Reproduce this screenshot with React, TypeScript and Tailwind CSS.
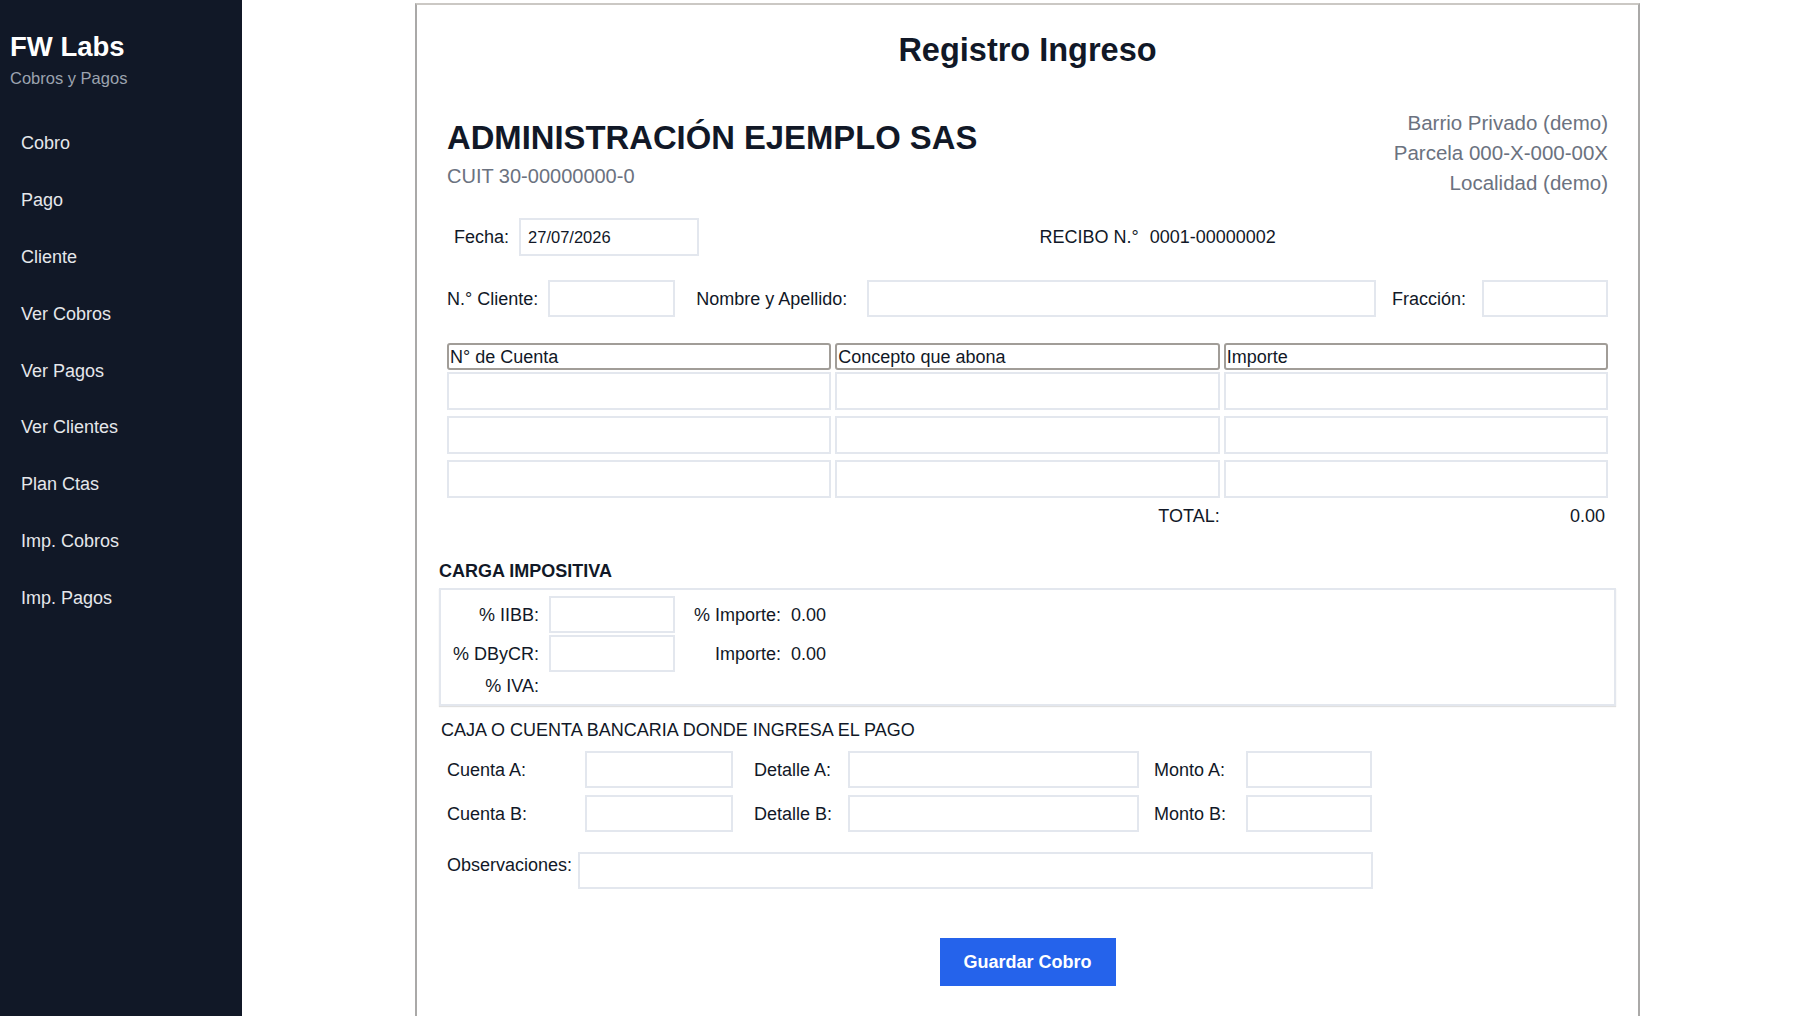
import React from "react";

const navItems = ["Cobro", "Pago", "Cliente", "Ver Cobros", "Ver Pagos", "Ver Clientes", "Plan Ctas", "Imp. Cobros", "Imp. Pagos"];

function Field({ className = "" }: { className?: string }) {
  return <div className={"border-2 border-[#e3e7ee] bg-white " + className} />;
}

export default function App() {
  return (
    <div className="flex min-h-[1016px] w-full bg-white text-[#111827]" style={{ fontFamily: '"Liberation Sans", Arial, sans-serif' }}>
      <aside className="w-[242px] shrink-0 bg-[#111827]">
        <div className="pl-[10px] pt-[31px]">
          <div className="text-[27.5px] font-bold leading-[32px] text-white">FW Labs</div>
          <div className="mt-[4px] text-[16.5px] leading-[22px] text-[#9ca3af]">Cobros y Pagos</div>
        </div>
        <nav className="mt-[26px] flex flex-col">
          {navItems.map((n) => (
            <div key={n} className="flex h-[56.8px] items-center pl-[21px] text-[18px] leading-[24px] text-[#e5e7eb]">
              {n}
            </div>
          ))}
        </nav>
      </aside>

      <main className="flex-1">
        <div className="ml-[173px] mt-[3px] w-[1225px] border-2 border-[#aaa9a8] border-t-[#cbc8c4] bg-white px-[30px] pb-[40px] pt-[25px]">
          <h1 className="text-center text-[32.5px] font-bold leading-[40px]">Registro Ingreso</h1>

          <div className="mt-[38px] flex justify-between">
            <div className="pt-[10px]">
              <div className="text-[32.8px] font-bold leading-[40px]">ADMINISTRACIÓN EJEMPLO SAS</div>
              <div className="mt-[4px] text-[20px] leading-[28px] text-[#6b7280]">CUIT 30-00000000-0</div>
            </div>
            <div className="text-right text-[20.5px] leading-[30px] text-[#6b7280]">
              <div>Barrio Privado (demo)</div>
              <div>Parcela 000-X-000-00X</div>
              <div>Localidad (demo)</div>
            </div>
          </div>

          <div className="mt-[20px] grid grid-cols-2 gap-x-6 text-[18px] leading-[24px]">
            <div className="flex items-center">
              <span className="ml-[7px]">Fecha:</span>
              <div className="ml-[10px] flex h-[38px] w-[180px] items-center border-2 border-[#e3e7ee] px-[7px] text-[16.5px]">27/07/2026</div>
            </div>
            <div className="flex items-center">
              <span>RECIBO N.°</span>
              <span className="ml-[11px]">0001-00000002</span>
            </div>
          </div>

          <div className="mt-[24px] flex items-center text-[18px] leading-[24px]">
            <span>N.° Cliente:</span>
            <Field className="ml-[10px] h-[37px] w-[127px]" />
            <span className="ml-[21px]">Nombre y Apellido:</span>
            <Field className="ml-[20px] h-[37px] flex-1" />
            <span className="ml-[16px]">Fracción:</span>
            <Field className="ml-[16px] h-[37px] w-[126px]" />
          </div>

          <div className="mt-[26px] grid grid-cols-3 gap-x-1 text-[18px] leading-[23px]">
            {["N° de Cuenta", "Concepto que abona", "Importe"].map((h) => (
              <div key={h} className="flex h-[27px] items-center rounded-[3px] border-2 border-[#a19d98] pl-[1px] pt-[2px]">
                {h}
              </div>
            ))}
          </div>
          <div className="mt-[2px] grid grid-cols-3 gap-x-1 gap-y-[6px]">
            {Array.from({ length: 9 }).map((_, i) => (
              <Field key={i} className="h-[38px]" />
            ))}
          </div>
          <div className="mt-[6px] grid grid-cols-3 gap-x-1 text-[18px] leading-[24px]">
            <div />
            <div className="text-right">TOTAL:</div>
            <div className="pr-[3px] text-right">0.00</div>
          </div>

          <div className="-mx-2 mt-[31px]">
            <div className="text-[18px] font-bold leading-[24px]">CARGA IMPOSITIVA</div>
            <div className="mt-[5px] border-2 border-[#e3e7ee] px-0 pb-[6px] pt-[6px] shadow-[0_1px_1px_rgba(0,0,0,0.12)]">
              <div className="grid grid-cols-[98px_126px_96px_auto] items-center gap-x-[10px] gap-y-[2px] text-[18px] leading-[24px]">
                <div className="text-right">% IIBB:</div>
                <Field className="h-[37px]" />
                <div className="text-right">% Importe:</div>
                <div>0.00</div>
                <div className="text-right">% DByCR:</div>
                <Field className="h-[37px]" />
                <div className="text-right">Importe:</div>
                <div>0.00</div>
                <div className="text-right">% IVA:</div>
                <div />
                <div />
                <div />
              </div>
            </div>
          </div>

          <div className="ml-[-6px] mt-[12px] text-[18px] leading-[24px]">CAJA O CUENTA BANCARIA DONDE INGRESA EL PAGO</div>

          <div className="mt-[9px] grid grid-cols-[138px_148px_115px_291px_107px_126px] items-center gap-y-[7px] text-[18px] leading-[24px]">
            <div>Cuenta A:</div>
            <Field className="h-[37px]" />
            <div className="pl-[21px]">Detalle A:</div>
            <Field className="h-[37px]" />
            <div className="pl-[15px]">Monto A:</div>
            <Field className="h-[37px]" />
            <div>Cuenta B:</div>
            <Field className="h-[37px]" />
            <div className="pl-[21px]">Detalle B:</div>
            <Field className="h-[37px]" />
            <div className="pl-[15px]">Monto B:</div>
            <Field className="h-[37px]" />
          </div>

          <div className="mt-[20px] flex items-start text-[18px] leading-[24px]">
            <span className="mt-[1px]">Observaciones:</span>
            <Field className="ml-[6px] h-[37px] w-[795px]" />
          </div>

          <div className="mt-[49px] flex justify-center">
            <button className="h-[48px] w-[176px] bg-[#2563eb] text-[18px] font-bold text-white">Guardar Cobro</button>
          </div>
        </div>
      </main>
    </div>
  );
}
